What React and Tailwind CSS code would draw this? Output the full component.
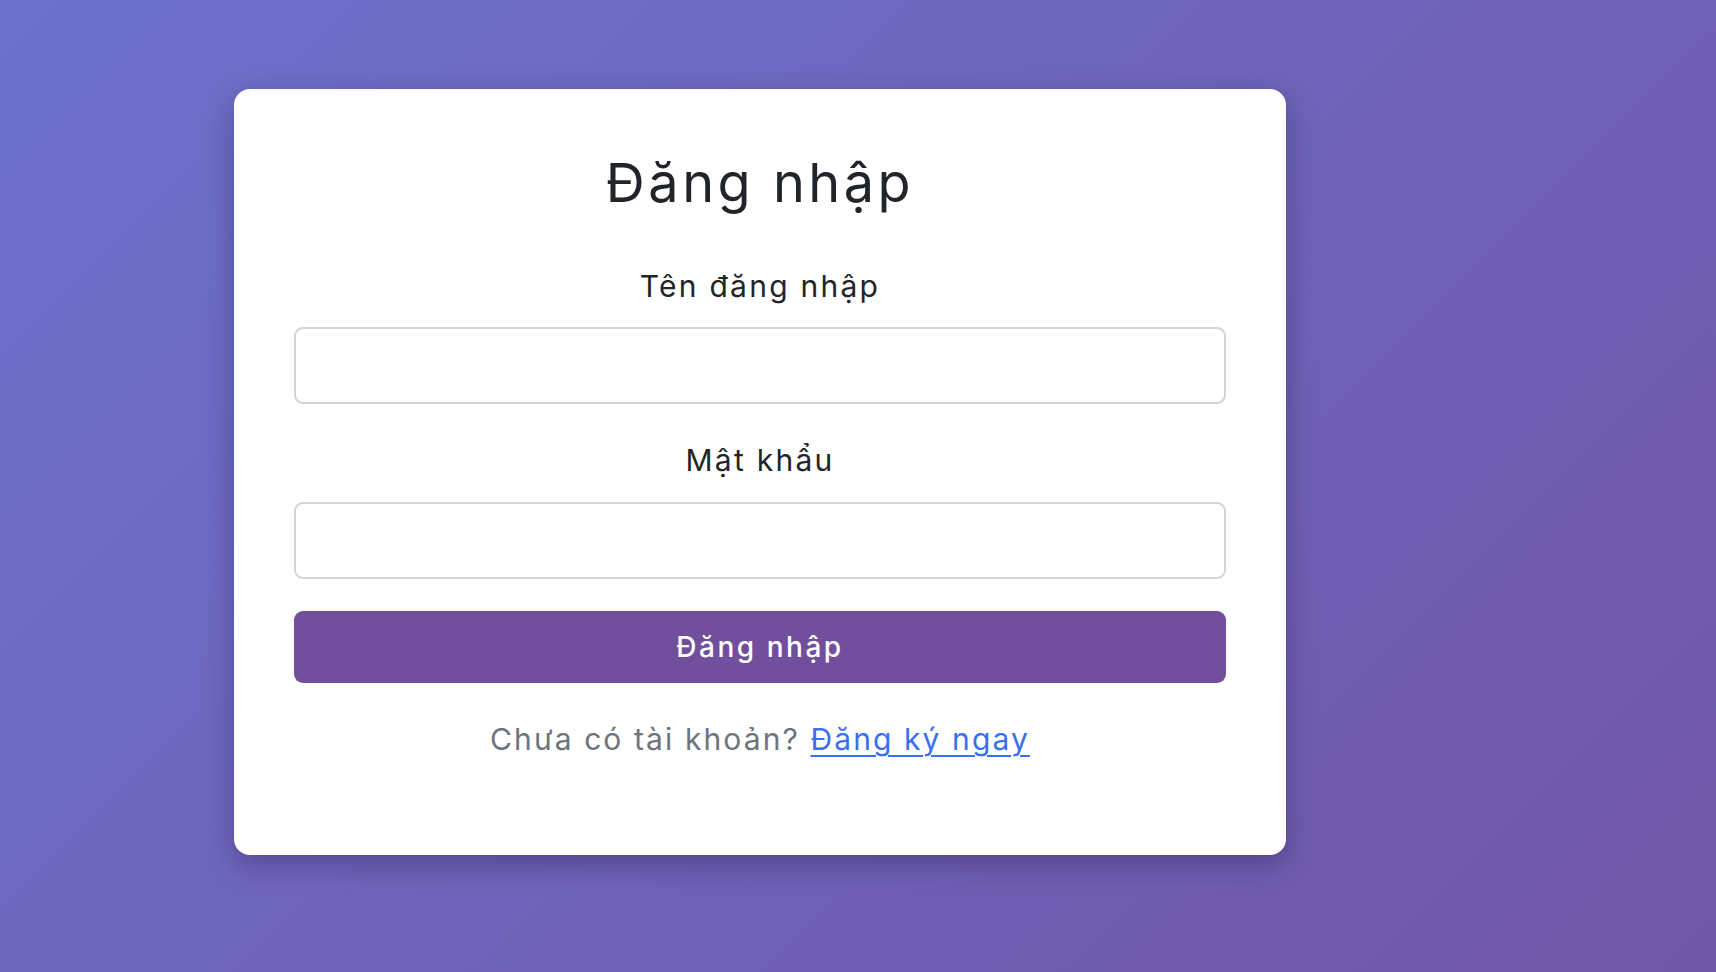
import React from "react";

export default function App() {
  return (
    <div
      className="w-[1716px] h-[972px] overflow-hidden bg-[linear-gradient(135deg,#6c71cc_0%,#7157a8_100%)] pt-[89px] pl-[234px]"
      style={{ fontFamily: "Inter, 'Noto Sans', sans-serif" }}
    >
      <div className="w-[1052px] bg-white rounded-[16px] shadow-[0_10px_28px_rgba(30,20,70,0.35)] px-[60px] pt-[62px] pb-[98px] flex flex-col">
        <h2 className="text-[54px] leading-[64px] tracking-[0.065em] text-center text-[#212529] font-normal">
          Đăng nhập
        </h2>
        <label className="mt-[53px] text-[30px] leading-[36px] tracking-[0.075em] text-center text-[#212529]">
          Tên đăng nhập
        </label>
        <input
          type="text"
          className="mt-[23px] h-[77px] w-full rounded-[9px] border-2 border-[#d0d5da] bg-white outline-none"
        />
        <label className="mt-[38px] text-[30px] leading-[36px] tracking-[0.075em] text-center text-[#212529]">
          Mật khẩu
        </label>
        <input
          type="password"
          className="mt-[24px] h-[77px] w-full rounded-[9px] border-2 border-[#d0d5da] bg-white outline-none"
        />
        <button className="mt-[32px] h-[72px] w-full rounded-[9px] bg-[#714f9c] text-white text-[28px] leading-[36px] font-medium tracking-[0.09em]">
          Đăng nhập
        </button>
        <p className="mt-[38px] text-[30px] leading-[36px] tracking-[0.07em] text-center text-[#6c757d]">
          Chưa có tài khoản?{" "}
          <a href="#" className="text-[#3a6ff0] underline decoration-2 underline-offset-[5px]">
            Đăng ký ngay
          </a>
        </p>
      </div>
    </div>
  );
}
